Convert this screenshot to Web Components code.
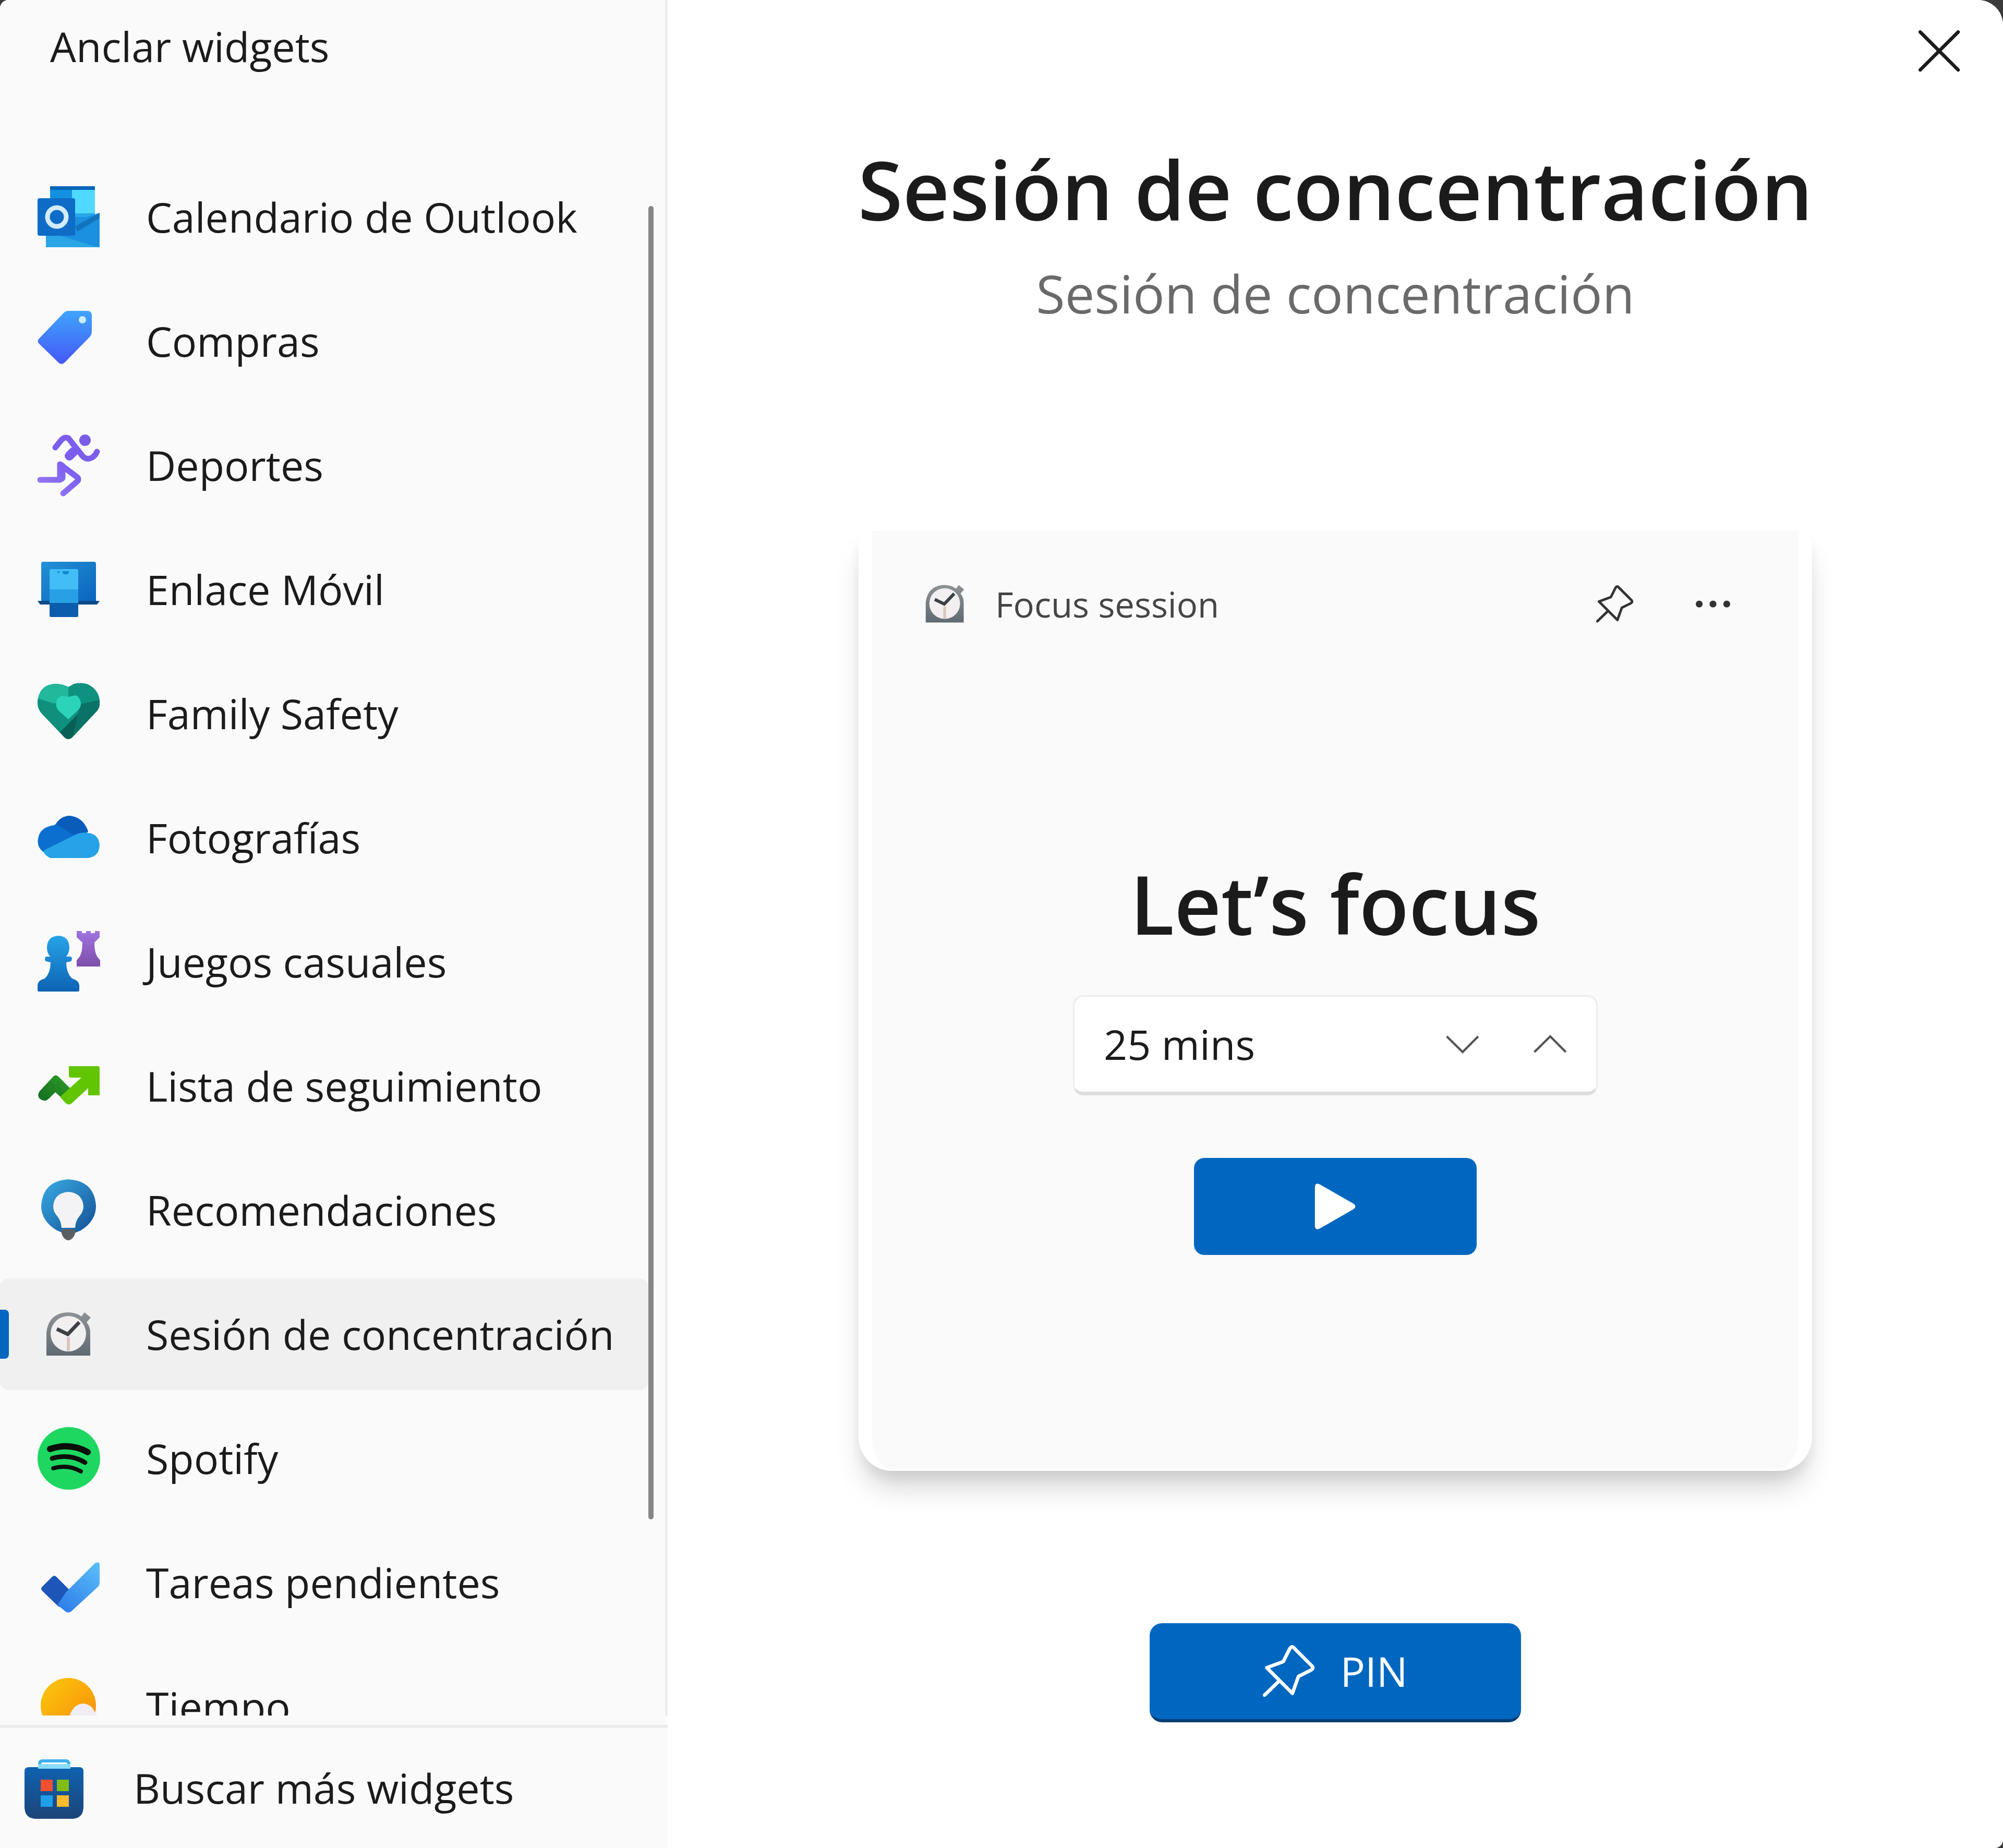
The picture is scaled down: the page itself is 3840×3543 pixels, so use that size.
<!DOCTYPE html>
<html lang="es">
<head>
<meta charset="utf-8">
<title>Anclar widgets</title>
<style>
  html, body { height: 100%; margin: 0; }
  body {
    background: #3a3a3a;
    color: #1b1b1b;
    font-family: "Segoe UI", "Open Sans", "Noto Sans", sans-serif;
    font-size: 79px;
    line-height: 112px;
  }
</style>
</head>
<body>
<widget-picker>
  <widget-sidebar slot="sidebar" heading="Anclar widgets">
    <widget-item icon="outlook">Calendario de Outlook</widget-item>
    <widget-item icon="tag">Compras</widget-item>
    <widget-item icon="runner">Deportes</widget-item>
    <widget-item icon="phone">Enlace Móvil</widget-item>
    <widget-item icon="heart">Family Safety</widget-item>
    <widget-item icon="cloud">Fotografías</widget-item>
    <widget-item icon="chess">Juegos casuales</widget-item>
    <widget-item icon="stocks">Lista de seguimiento</widget-item>
    <widget-item icon="bulb">Recomendaciones</widget-item>
    <widget-item icon="clock" selected>Sesión de concentración</widget-item>
    <widget-item icon="spotify">Spotify</widget-item>
    <widget-item icon="todo">Tareas pendientes</widget-item>
    <widget-item icon="weather">Tiempo</widget-item>
    <span slot="more">Buscar más widgets</span>
  </widget-sidebar>
  <widget-preview slot="preview">
    <span slot="title">Sesión de concentración</span>
    <span slot="subtitle">Sesión de concentración</span>
    <focus-card></focus-card>
  </widget-preview>
</widget-picker>

<script>
const icons = {
  outlook: `
    <path d="M24 1h86v60H24z" fill="#28a8ea"/>
    <path d="M66 1h44v52H66z" fill="#50d9ff"/>
    <path d="M24 1h42v26H24z" fill="#1490df"/>
    <path d="M24 1h86v7H24z" fill="#0364b8"/>
    <path d="M72 60h22l25-8v66H16V92z" fill="#1b8fe0"/>
    <path d="M72 78l47-26v10L76 88z" fill="#1273bd"/>
    <path d="M16 88l100 30H20q-4 0-4-4z" fill="#2aa6e6"/>
    <rect y="24" width="72" height="72" rx="4" fill="#0f6cc6"/>
    <circle cx="37" cy="60" r="18" fill="none" stroke="#d3ebff" stroke-width="9"/>`,
  tag: `
    <linearGradient id="g" x1="0" y1="0" x2="0" y2="1"><stop offset="0" stop-color="#3fa4fb"/><stop offset="1" stop-color="#4558f7"/></linearGradient>
    <path d="M59 2h36q9 0 9 9v30q0 7-5 12L52 101q-6 6-12 0L3 65q-5-5 0-10L50 6q4-4 9-4z" fill="url(#g)"/>
    <circle cx="86" cy="19" r="7" fill="#c9efff"/>`,
  runner: `
    <linearGradient id="g" gradientUnits="userSpaceOnUse" x1="0" y1="118" x2="110" y2="0"><stop offset="0" stop-color="#9a7cf2"/><stop offset=".5" stop-color="#7d5ff0"/><stop offset="1" stop-color="#7a5ce8"/></linearGradient>
    <circle cx="91" cy="12" r="11" fill="#7a5ce8"/>
    <g fill="none" stroke="url(#g)" stroke-width="11" stroke-linecap="round" stroke-linejoin="round">
      <path d="M34 26l12-15q6-6 13-3l27 34q6 7 14 5 9-2 14-13"/>
      <path d="M69 34L61 42" stroke-width="18"/>
      <path d="M5 88h38V58l33 25q4 4 0 8L49 114"/>
      <path d="M46 62v22" stroke-width="15"/>
    </g>`,
  phone: `
    <linearGradient id="g" x1="0" y1="0" x2="1" y2="1"><stop offset="0" stop-color="#2291d6"/><stop offset="1" stop-color="#0a63bd"/></linearGradient>
    <rect x="7" y="7" width="105" height="79" rx="4" fill="url(#g)"/>
    <path d="M0 82h119l-5 7H5z" fill="#0b4a88"/>
    <rect x="23" y="21" width="55" height="92" rx="3" fill="#0b5cad"/>
    <path d="M26 21h49q3 0 3 3v62H23V24q0-3 3-3z" fill="#43bdf5"/>
    <path d="M23 60h55v26H23z" fill="#29a0e6"/>
    <circle cx="40" cy="27" r="2" fill="#1286cf"/>
    <path d="M47 25h14l-3 6h-8z" fill="#1286cf"/>`,
  heart: `
    <path d="M59 9l11-6q22-5 36 7 15 13 13 33-1 9-8 15l-44 47q-8 8-16 0L8 60Q-3 48 1 31 6 5 33 3q15 0 26 6z" fill="#0f9180"/>
    <path d="M59 9q-12-6-26-6Q6 5 1 31l31 10 27-13z" fill="#21b89b"/>
    <path d="M1 31q-3 17 7 29l43 45-13-49z" fill="#0f8f7c"/>
    <path d="M119 43q-1 9-8 15l-44 47q-8 8-16 0l-8-9 44-45z" fill="#085f55"/>
    <path d="M82 42l37-8q1 16-8 24L67 105z" fill="#0a7266"/>
    <path d="M59 28l15-3q10 7 9 18-1 7-7 12L59 71 41 55q-7-7-5-17 2-9 10-12z" fill="#2bd4b8"/>`,
  cloud: `
    <path d="M35 34Q44 19 61 18q26 2 36 30-22 32-82 42Q-2 80 1 62q3-20 25-25 5 0 9-3z" fill="#0b6fd0"/>
    <path d="M35 34Q44 19 61 18q26 2 36 30l-26 8z" fill="#0a5cbb"/>
    <path d="M11 87q2-4 12-8l52-26q9-4 22-2 20 2 22 23-1 24-25 25H25q-10-4-14-12z" fill="#26a3e8"/>`,
  chess: `
    <linearGradient id="g" x1="0" y1="0" x2="0" y2="1"><stop offset="0" stop-color="#27a3e6"/><stop offset="1" stop-color="#0d63b4"/></linearGradient>
    <linearGradient id="h" x1="0" y1="0" x2="0" y2="1"><stop offset="0" stop-color="#a173e0"/><stop offset="1" stop-color="#7b4fa8"/></linearGradient>
    <path d="M40 10q20 1 21 22 0 11-6 18h9q4 4 0 9l-9 2q0 20 11 31 14 4 14 14v8q0 3-3 3H3q-3 0-3-3v-8q0-11 14-14 11-11 11-31l-9-2q-4-5 0-9h8q-6-7-6-18 1-21 22-22z" fill="url(#g)"/>
    <path d="M75 1h10v4h8V1h9v4h8V1h9v12l-10 10q0 20 6 28l5 6v12H75V57l5-6q6-8 6-28L75 13z" fill="url(#h)"/>`,
  stocks: `
    <linearGradient id="g" x1="0" y1="1" x2="1" y2="0"><stop offset="0" stop-color="#146a1e"/><stop offset="1" stop-color="#2fa02a"/></linearGradient>
    <path d="M4 70l26-28q5-5 10 0l26 26-12 22-20-18-12 12q-8 8-17 1-7-6-1-15z" fill="url(#g)"/>
    <path d="M60 22h55q4 0 4 4v52H97V64L66 93q-6 5-12 0L43 81 84 44H64q-4 0-4-4z" fill="#62c504"/>`,
  bulb: `
    <linearGradient id="g" x1="0" y1="0" x2="1" y2="1"><stop offset="0" stop-color="#38ace4"/><stop offset="1" stop-color="#154f94"/></linearGradient>
    <path d="M59 1q50 3 53 51 0 29-29 47l-12 5H49l-12-5Q7 81 7 52 10 4 59 1z" fill="url(#g)"/>
    <path d="M59 25q27 2 29 28 0 10-8 19-7 8-8 22H46q-1-14-8-22-8-9-8-19 2-26 29-28z" fill="#f3f3f5"/>
    <path d="M46 97h26v8q-4 12-13 13-9-1-13-13z" fill="#5b5f63"/>`,
  clock: `
    <linearGradient id="g" x1="0" y1="0" x2="0" y2="1"><stop offset="0" stop-color="#8f9295"/><stop offset="1" stop-color="#5f6a73"/></linearGradient>
    <path d="M17 101V57Q21 20 57 18q17 0 27 8l6-8 12 10-8 9q7 8 7 20v44z" fill="url(#g)"/>
    <circle cx="59" cy="59" r="34" fill="#f1eff0"/>
    <path d="M59 66v26" stroke="#d9c5bd" stroke-width="6"/>
    <path d="M37 50l21 10 22-23" fill="none" stroke="#3d4145" stroke-width="7"/>`,
  spotify: `
    <circle cx="60" cy="60" r="60" fill="#1ed760"/>
    <g fill="none" stroke="#0a0f0b" stroke-linecap="round">
      <path d="M24 42q38-13 72 6" stroke-width="12"/>
      <path d="M28 60q34-10 63 8" stroke-width="9"/>
      <path d="M30 79q28-8 53 6" stroke-width="8"/>
    </g>`,
  todo: `
    <linearGradient id="g" gradientUnits="userSpaceOnUse" x1="50" y1="110" x2="119" y2="20"><stop offset="0" stop-color="#2f80ea"/><stop offset="1" stop-color="#5cc0fa"/></linearGradient>
    <path d="M9 68l19-19q4-4 8 0l30 30-25 28L9 76q-4-4 0-8z" fill="#1d55b8"/>
    <path d="M54 79l56-56q9-4 9 3v34q0 5-3 8l-51 47q-6 5-12 0l-15-12z" fill="url(#g)"/>`,
  weather: `
    <linearGradient id="g" x1="0" y1="0" x2="1" y2="1"><stop offset="0" stop-color="#fcc90d"/><stop offset="1" stop-color="#f78a09"/></linearGradient>
    <circle cx="59" cy="58" r="53" fill="url(#g)"/>
    <path d="M48 112q-4-24 13-33 7-24 27-25 17 2 22 18 10 6 10 20v20z" fill="#f0edf4"/>`,
  store: `
    <linearGradient id="g" x1="0" y1="0" x2="0" y2="1"><stop offset="0" stop-color="#0f62b0"/><stop offset="1" stop-color="#1c4478"/></linearGradient>
    <path d="M32 26V14q0-6 6-6h44q6 0 6 6v12" fill="none" stroke="#3fb0ee" stroke-width="6"/>
    <path d="M12 20h96q8 0 8 8v68q0 23-23 23H26Q3 119 3 96V28q0-8 9-8z" fill="url(#g)"/>
    <path d="M29 14h62v9H29z" fill="#8adcff"/>
    <path d="M34 44h23v22H34z" fill="#f25130"/><path d="M65 44h23v22H65z" fill="#82bd16"/>
    <path d="M34 74h23v22H34z" fill="#1f9fea"/><path d="M65 74h23v22H65z" fill="#fdbb2c"/>`,
  pin: `
    <path d="M70 5l43 43q5 6-3 10L82 72 68 111 9 52l38-14L61 10q4-8 9-5zM38 82L4 115" fill="none" stroke="currentColor" stroke-width="8" stroke-linejoin="round" stroke-linecap="round"/>`,
  more: `<g fill="currentColor"><circle cx="16" cy="60" r="11"/><circle cx="60" cy="60" r="11"/><circle cx="104" cy="60" r="11"/></g>`,
  close: `<path d="M5 5l109 109M114 5L5 114" stroke="currentColor" stroke-width="10" stroke-linecap="round"/>`,
  down: `<path d="M3 32l57 56 56-56" fill="none" stroke="currentColor" stroke-width="8"/>`,
  up: `<path d="M3 88l57-56 56 56" fill="none" stroke="currentColor" stroke-width="8"/>`,
  play: `<path d="M10 12q1-12 12-6l82 47q10 7 0 14l-82 47q-11 6-12-6z" fill="currentColor"/>`
};

class WidgetIcon extends HTMLElement {
  constructor() {
    super();
    this.attachShadow({ mode: "open" });
  }
  connectedCallback() {
    this.shadowRoot.innerHTML = `
      <style>
        :host { display: block; flex: none; width: 120px; height: 120px; }
        svg { display: block; width: 100%; height: 100%; }
      </style>
      <svg viewBox="0 0 120 120" aria-hidden="true">${icons[this.getAttribute("name")]}</svg>
    `;
  }
}
customElements.define("widget-icon", WidgetIcon);

class WidgetItem extends HTMLElement {
  constructor() {
    super();
    this.attachShadow({ mode: "open" });
  }
  connectedCallback() {
    const current = this.hasAttribute("selected") ? `aria-current="true"` : "";
    this.shadowRoot.innerHTML = `
      <style>
        :host { display: block; flex: none; }
        button {
          position: relative;
          display: flex;
          align-items: center;
          gap: 88px;
          width: 100%;
          height: 214px;
          padding: 0 0 0 72px;
          border: 0;
          border-radius: 16px;
          background: none;
          color: inherit;
          font: inherit;
          text-align: left;
          white-space: nowrap;
        }
        button[aria-current] { background: #f0f0f0; }
        button[aria-current]::before {
          content: "";
          position: absolute;
          left: 0;
          width: 17px;
          height: 94px;
          border-radius: 0 8px 8px 0;
          background: #0067c0;
        }
      </style>
      <button type="button" ${current}>
        <widget-icon name="${this.getAttribute("icon")}"></widget-icon>
        <slot></slot>
      </button>
    `;
  }
}
customElements.define("widget-item", WidgetItem);

class WidgetSidebar extends HTMLElement {
  constructor() {
    super();
    this.attachShadow({ mode: "open" });
  }
  connectedCallback() {
    this.shadowRoot.innerHTML = `
      <style>
        :host {
          display: flex;
          flex-direction: column;
          min-height: 0;
          background: #fafafa;
        }
        h1 {
          flex: none;
          margin: 0;
          padding: 33px 96px 164px;
          border-right: 5px solid #ebebeb;
          font: inherit;
        }
        .scroll {
          display: flex;
          flex: 1;
          min-height: 0;
          margin-bottom: 18px;
          border-right: 5px solid #ebebeb;
        }
        nav {
          display: flex;
          flex: 1;
          flex-direction: column;
          gap: 24px;
          min-width: 0;
          overflow: hidden;
        }
        .track { width: 32px; padding-top: 86px; }
        .thumb {
          width: 10px;
          height: 87%;
          border-radius: 5px;
          background: #868686;
        }
        footer { flex: none; border-top: 6px solid #ebebeb; }
        footer button {
          display: flex;
          align-items: center;
          gap: 92px;
          width: 100%;
          height: 230px;
          padding: 0 0 0 44px;
          border: 0;
          background: none;
          color: inherit;
          font: inherit;
          white-space: nowrap;
        }
      </style>
      <h1>${this.getAttribute("heading")}</h1>
      <div class="scroll">
        <nav><slot></slot></nav>
        <div class="track"><div class="thumb"></div></div>
      </div>
      <footer>
        <button type="button"><widget-icon name="store"></widget-icon><slot name="more"></slot></button>
      </footer>
    `;
  }
}
customElements.define("widget-sidebar", WidgetSidebar);

class FocusCard extends HTMLElement {
  constructor() {
    super();
    this.attachShadow({ mode: "open" });
  }
  connectedCallback() {
    this.shadowRoot.innerHTML = `
      <style>
        :host {
          display: flex;
          flex-direction: column;
          align-items: center;
          box-sizing: border-box;
          width: 1828px;
          max-width: 100%;
          padding: 88px 104px 410px;
          border: solid #fff;
          border-width: 0 26px 4px;
          border-radius: 24px 24px 64px 64px;
          background: #fafafa;
          box-shadow: 0 40px 56px -12px rgba(0, 0, 0, .18), 0 16px 20px rgba(0, 0, 0, .05);
        }
        header {
          display: flex;
          align-items: center;
          align-self: stretch;
          gap: 60px;
          padding-right: 24px;
          color: #454545;
          font-size: 67px;
          line-height: 104px;
        }
        header span { flex: 1; }
        header widget-icon { width: 72px; height: 72px; }
        header .app { width: 104px; height: 104px; margin: 0 -16px; }
        header button {
          margin: 0 0 0 56px;
          padding: 0;
          border: 0;
          background: none;
          color: #333;
        }
        h3 {
          margin: 410px 0 64px;
          font-size: 156px;
          font-weight: 600;
          line-height: 224px;
        }
        .field {
          display: flex;
          align-items: center;
          gap: 104px;
          box-sizing: border-box;
          width: 1006px;
          height: 192px;
          padding: 0 56px;
          border: 3px solid #ededed;
          border-bottom: 7px solid #dedede;
          border-radius: 20px;
          background: #fff;
        }
        input {
          flex: 1;
          min-width: 0;
          padding: 0;
          border: 0;
          background: none;
          color: inherit;
          font: inherit;
        }
        .field button { padding: 0; border: 0; background: none; color: #555; }
        .field widget-icon { width: 64px; height: 64px; }
        .play {
          display: flex;
          align-items: center;
          justify-content: center;
          width: 542px;
          height: 186px;
          margin-top: 120px;
          border: 0;
          border-radius: 20px;
          background: #0067c0;
          color: #fff;
        }
        .play widget-icon { width: 94px; height: 94px; }
      </style>
      <header>
        <widget-icon class="app" name="clock"></widget-icon>
        <span>Focus session</span>
        <button type="button" aria-label="Pin"><widget-icon name="pin"></widget-icon></button>
        <button type="button" aria-label="More options"><widget-icon name="more"></widget-icon></button>
      </header>
      <h3>Let’s focus</h3>
      <div class="field">
        <input type="text" value="25 mins" aria-label="Duration">
        <button type="button" aria-label="Less time"><widget-icon name="down"></widget-icon></button>
        <button type="button" aria-label="More time"><widget-icon name="up"></widget-icon></button>
      </div>
      <button class="play" type="button" aria-label="Start"><widget-icon name="play"></widget-icon></button>
    `;
  }
}
customElements.define("focus-card", FocusCard);

class WidgetPreview extends HTMLElement {
  constructor() {
    super();
    this.attachShadow({ mode: "open" });
  }
  connectedCallback() {
    this.shadowRoot.innerHTML = `
      <style>
        :host {
          display: flex;
          flex-direction: column;
          align-items: center;
          background: #fff;
        }
        .close {
          align-self: flex-end;
          margin: 58px 82px 0;
          padding: 0;
          border: 0;
          background: none;
          color: #1b1b1b;
        }
        .close widget-icon { width: 80px; height: 80px; }
        h2, p { margin: 0; text-align: center; }
        h2 {
          margin-top: 112px;
          font-size: 156px;
          font-weight: 600;
          line-height: 224px;
        }
        p {
          margin: 16px 0 384px;
          color: #6a6a6a;
          font-size: 101px;
          line-height: 144px;
        }
        .pin {
          display: flex;
          align-items: center;
          justify-content: center;
          gap: 48px;
          width: 712px;
          height: 190px;
          margin-top: 292px;
          border: 0;
          border-bottom: 6px solid #003e73;
          border-radius: 24px;
          background: #0067c0;
          color: #fff;
          font: inherit;
        }
        .pin widget-icon { width: 100px; height: 100px; }
      </style>
      <button class="close" type="button" aria-label="Cerrar"><widget-icon name="close"></widget-icon></button>
      <h2><slot name="title"></slot></h2>
      <p><slot name="subtitle"></slot></p>
      <slot></slot>
      <button class="pin" type="button"><widget-icon name="pin"></widget-icon>PIN</button>
    `;
  }
}
customElements.define("widget-preview", WidgetPreview);

class WidgetPicker extends HTMLElement {
  constructor() {
    super();
    this.attachShadow({ mode: "open" });
    this.shadowRoot.innerHTML = `
      <style>
        :host {
          display: grid;
          grid-template-columns: 1fr 2fr;
          grid-template-rows: 100%;
          height: 100vh;
          overflow: hidden;
          border-radius: 16px 48px 16px 0;
          background: #fff;
        }
      </style>
      <slot name="sidebar"></slot>
      <slot name="preview"></slot>
    `;
  }
}
customElements.define("widget-picker", WidgetPicker);
</script>
</body>
</html>
